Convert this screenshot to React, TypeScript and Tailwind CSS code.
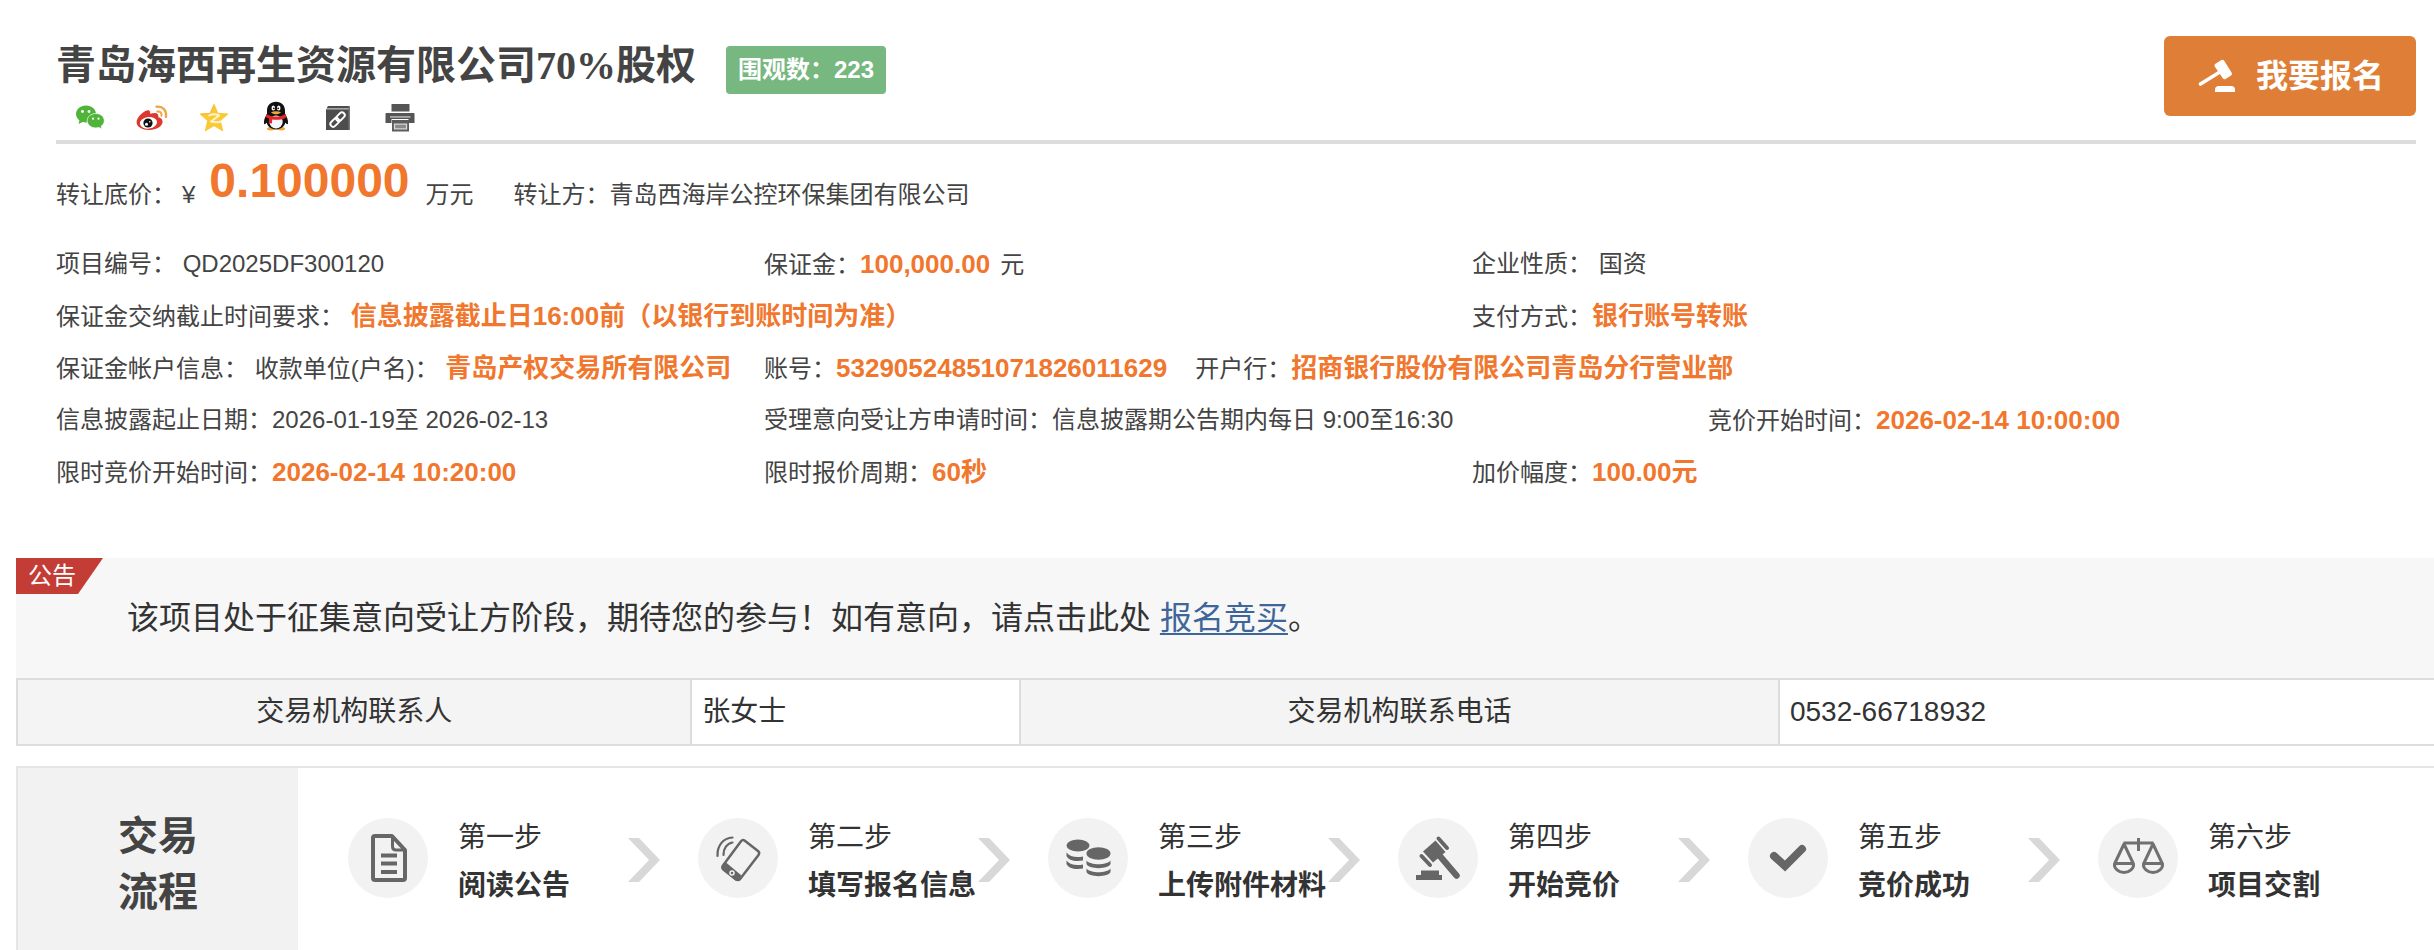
import React from "react";

type Piece = { text: string; strong?: boolean; className?: string };
type Cell = { span: string; pieces: Piece[] };

const infoRows: Cell[][] = [
    [
        { span: "col-span-3", pieces: [{ text: "项目编号： " }, { text: "QD2025DF300120" }] },
        {
            span: "col-span-3",
            pieces: [{ text: "保证金：" }, { text: "100,000.00", strong: true }, { text: "元", className: "ml-2.5" }]
        },
        { span: "col-span-4", pieces: [{ text: "企业性质： " }, { text: "国资" }] }
    ],
    [
        {
            span: "col-span-6",
            pieces: [
                { text: "保证金交纳截止时间要求： " },
                { text: "信息披露截止日16:00前（以银行到账时间为准）", strong: true }
            ]
        },
        { span: "col-span-4", pieces: [{ text: "支付方式：" }, { text: "银行账号转账", strong: true }] }
    ],
    [
        {
            span: "col-span-3",
            pieces: [
                { text: "保证金帐户信息： " },
                { text: "收款单位(户名)： " },
                { text: "青岛产权交易所有限公司", strong: true }
            ]
        },
        {
            span: "col-span-7",
            pieces: [
                { text: "账号：" },
                { text: "53290524851071826011629", strong: true },
                { text: "开户行：", className: "ml-7" },
                { text: "招商银行股份有限公司青岛分行营业部", strong: true }
            ]
        }
    ],
    [
        { span: "col-span-3", pieces: [{ text: "信息披露起止日期：" }, { text: "2026-01-19至 2026-02-13" }] },
        {
            span: "col-span-4",
            pieces: [{ text: "受理意向受让方申请时间：" }, { text: "信息披露期公告期内每日 9:00至16:30" }]
        },
        { span: "col-span-3", pieces: [{ text: "竞价开始时间：" }, { text: "2026-02-14 10:00:00", strong: true }] }
    ],
    [
        { span: "col-span-3", pieces: [{ text: "限时竞价开始时间：" }, { text: "2026-02-14 10:20:00", strong: true }] },
        { span: "col-span-3", pieces: [{ text: "限时报价周期：" }, { text: "60秒", strong: true }] },
        { span: "col-span-4", pieces: [{ text: "加价幅度：" }, { text: "100.00元", strong: true }] }
    ]
];

const WechatIcon = () => (
    <svg viewBox="0 0 32 32" className="size-8">
        <path d="M12 5.500C6.300 5.500 2 9.300 2 14c0 2.600 1.300 4.800 3.400 6.400L4.600 24l4-2c1.100.3 2.200.5 3.400.5 5.700 0 10-3.800 10-8.500S17.700 5.500 12 5.500z" fill="#50b43a" />
        <path d="M21.800 13.500c-4.800 0-8.600 3.200-8.600 7.200s3.800 7.200 8.600 7.200c1 0 2-.2 2.900-.4l3.200 1.300-.6-2.800c1.900-1.300 3-3.200 3-5.300 0-4-3.700-7.200-8.500-7.200z" fill="#50b43a" stroke="#fff" strokeWidth=".7" />
        <circle cx="8.500" cy="11.500" r="1.400" fill="#fff" />
        <circle cx="15" cy="11.500" r="1.400" fill="#fff" />
        <circle cx="19" cy="18.700" r="1.100" fill="#fff" />
        <circle cx="24.500" cy="18.700" r="1.100" fill="#fff" />
    </svg>
);

const WeiboIcon = () => (
    <svg viewBox="0 0 32 32" className="size-8">
        <path d="M14 13.800c.8-3.400-1.200-4.600-4.600-2.800C5 13.300.6 18.200.6 22.300c0 4.700 5.700 7.700 12.400 7.700 7.800 0 13.600-4 13.600-8.200 0-2.700-2-4-4.300-4.600.7-3.600-1.700-5.500-8.300-3.400z" fill="#dc3830" />
        <ellipse cx="12.500" cy="22.800" rx="8.600" ry="5.800" fill="#fff" transform="rotate(-8 12.500 22.800)" />
        <circle cx="12" cy="23" r="4.600" fill="#111" />
        <circle cx="10.500" cy="24.200" r="1.500" fill="#fff" />
        <circle cx="13.800" cy="21.800" r=".8" fill="#fff" />
        <path d="M20.500 6.700c6.300-.8 10.600 4 9.300 10.200" fill="none" stroke="#efa548" strokeWidth="2.400" strokeLinecap="round" />
        <path d="M21.300 11.500c3-.4 4.700 1.500 4.200 4.200" fill="none" stroke="#efa548" strokeWidth="2" strokeLinecap="round" />
    </svg>
);

const QzoneIcon = () => (
    <svg viewBox="0 0 32 32" className="size-8">
        <path d="M16 4.500l3.700 8.800 9.900.8-7.400 6.500 2.300 10L16 25.400l-8.500 5.200 2.300-10L2.400 14.100l9.900-.8z" fill="#fac937" stroke="#fac937" strokeWidth="1.200" strokeLinejoin="round" />
        <path d="M10.500 15.500c3.500-1.500 7.500-1.500 10.500 0l-8 6c3.500 1 7 1 10.500 0" fill="none" stroke="#fff3cf" strokeWidth="2" strokeLinejoin="round" />
        <path d="M3 14.200l9-.4 3.800-7.500" fill="none" stroke="#f3b83c" strokeWidth="1" />
    </svg>
);

const QqIcon = () => (
    <svg viewBox="0 0 32 32" className="size-8">
        <ellipse cx="11" cy="28.800" rx="4" ry="1.700" fill="#f1a33c" />
        <ellipse cx="21" cy="28.800" rx="4" ry="1.700" fill="#f1a33c" />
        <path d="M16 1.800c-5.500 0-9 3.700-9 8.700v3.600c-2 3-3.300 6-3 9.200.2 1.600 1.500 1 2.600-.7 1 4.200 4.700 6.800 9.400 6.800s8.400-2.600 9.400-6.800c1.100 1.700 2.400 2.300 2.600.7.300-3.200-1-6.200-3-9.200v-3.600c0-5-3.500-8.700-9-8.700z" fill="#111" />
        <ellipse cx="16" cy="22" rx="6.700" ry="6.500" fill="#f4f7fa" />
        <path d="M6.300 13.700c5.500 3.800 14 3.800 19.400 0l.8 3.500c-3.400 2.400-9.200 3.200-14.300 2.200l-.2 4-3.200-.5.200-4.400c-1.400-.5-2.500-1-3.200-1.600z" fill="#e2262c" />
        <ellipse cx="13.300" cy="8" rx="1.800" ry="2.500" fill="#fff" />
        <ellipse cx="18.700" cy="8" rx="1.800" ry="2.500" fill="#fff" />
        <circle cx="13.800" cy="8.300" r=".9" fill="#111" />
        <circle cx="18.200" cy="8.300" r=".9" fill="#111" />
        <path d="M11 12.300c3-1.400 7-1.400 10 0-2.700 2.700-7.300 2.700-10 0z" fill="#f0a92e" />
    </svg>
);

const CopyLinkIcon = () => (
    <svg viewBox="0 0 32 32" className="size-8">
        <path d="M6 6h22v2.500H4.500z" fill="#4d4d4d" />
        <path d="M4 9.300h24V30H4z" fill="#4d4d4d" />
        <path d="M26.500 6H28v24h-1.500z" fill="#777" />
        <g fill="none" stroke="#fff" strokeWidth="1.900" transform="rotate(-45 15.500 19.500)">
            <rect x="6.500" y="16.800" width="10" height="5.600" rx="2.800" />
            <rect x="14.500" y="16.800" width="10" height="5.600" rx="2.800" />
        </g>
    </svg>
);

const PrinterIcon = () => (
    <svg viewBox="0 0 32 32" className="size-8">
        <path d="M7.500 4h18v7.500h-18z" fill="#555" />
        <path d="M3.500 13h26c.6 0 1 .4 1 1v9h-6v-4h-17v4h-6v-9c0-.6.500-1 2-1z" fill="#555" />
        <path d="M6 16.200h20.500v1.500H6z" fill="#bbb" />
        <path d="M8 20h17v11.500H8z" fill="#5c5c5c" />
        <path d="M10.500 24.200h12v4.600h-12z" fill="#8a8a8a" stroke="#d8d8d8" strokeWidth="1.300" />
    </svg>
);

const shareLinks = [
    { name: "微信", icon: <WechatIcon /> },
    { name: "新浪微博", icon: <WeiboIcon /> },
    { name: "QQ空间", icon: <QzoneIcon /> },
    { name: "QQ", icon: <QqIcon /> },
    { name: "复制链接", icon: <CopyLinkIcon /> },
    { name: "打印", icon: <PrinterIcon /> }
];

const HammerIcon = () => (
    <svg viewBox="0 0 38 34" className="w-[38px] h-[34px]" fill="#fff">
        <path d="M2.500 25L21 13.500" stroke="#fff" strokeWidth="3.600" strokeLinecap="round" />
        <path d="M18.500 6.500l6-3.700 7.500 12-5.500 3.400z" stroke="#fff" strokeWidth="4" strokeLinejoin="round" />
        <path d="M17 33v-2.500c0-2 1.500-3.500 3.500-3.500h13c2 0 3.500 1.500 3.500 3.500V33z" />
    </svg>
);

const DocIcon = () => (
    <g fill="none" stroke="#666" strokeWidth="4">
        <path d="M27 18h17l13 14v28a2 2 0 0 1-2 2H27a2 2 0 0 1-2-2V20a2 2 0 0 1 2-2z" strokeLinejoin="round" />
        <path d="M44.500 18v10.500c0 2.500 1 3.500 3.500 3.500h9" strokeWidth="3" />
        <path d="M33 37.500h16M33 45.500h16M33 54h16" />
    </g>
);

const PhoneIcon = () => (
    <g fill="none" stroke="#666" strokeLinecap="round">
        <path d="M46.500 22.500l13.500 10.500c1.500 1.200 1.500 2.500.5 4L42.500 60.500c-1.500 2-3 2-4.500.8L25.500 51.500c-1.500-1.200-1.500-2.500-.5-4L43 23.300c1-1.300 2.200-1.700 3.500-.8z" strokeWidth="2.500" />
        <path d="M28 44.500l15.500 13-3 4.500c-1.200 1.200-2.500 1-3.500.2L25 52.500c-1.500-1.300-1.500-2.500-.5-4z" fill="#666" stroke="none" />
        <circle cx="34" cy="55" r="2" stroke="#f2f2f2" strokeWidth="1.500" />
        <path d="M19.500 38C19 28 25 20 34.500 19.500" strokeWidth="2.200" />
        <path d="M25.500 37c-.2-6.500 3.500-11.500 9-12.500" strokeWidth="2.200" />
    </g>
);

const CoinsIcon = () => (
    <g fill="#666">
        <ellipse cx="30" cy="27.500" rx="11.500" ry="6" />
        <path d="M18.500 34.500c3 4.300 10 5.500 16.500 4v4c-8 1.500-15-.5-16.500-4.500z" />
        <path d="M18.500 42.500c3 4.300 10 5.500 16.500 4v4c-8 1.500-15-.5-16.500-4.500z" />
        <ellipse cx="50.500" cy="35.500" rx="12" ry="6.200" />
        <path d="M38.500 42.500c4 5 20 5 24 0v3.500c-2 5.500-22 5.500-24 0z" />
        <path d="M38.500 50.500c4 5 20 5 24 0V54c-2 5.500-22 5.500-24 0z" />
    </g>
);

const GavelIcon = () => (
    <g fill="#666">
        <path d="M37.500 22.500L47.500 34 35 44.500 25 33.500z" />
        <path d="M40.500 20.500l8.500 9.500M23.500 38l8.500 9" fill="none" stroke="#666" strokeWidth="4" strokeLinecap="round" />
        <path d="M41 37l17.500 20.500" fill="none" stroke="#666" strokeWidth="6.500" strokeLinecap="round" />
        <path d="M23 52.500h18v4.500h3V62H18v-5h5z" />
    </g>
);

const CheckIcon = () => (
    <path d="M26 38l11 10 17-17" fill="none" stroke="#666" strokeWidth="8" strokeLinecap="round" />
);

const ScalesIcon = () => (
    <g fill="none" stroke="#707070" strokeWidth="3">
        <path d="M25.500 25h30M40.500 20v13" />
        <path d="M26 26l-9.500 20c-.5 4.500 4 8.500 9.500 8.500s10-4 9.500-8.500zM16.500 45.500h19" strokeLinejoin="round" />
        <path d="M55 26l-9.500 20c-.5 4.500 4 8.500 9.500 8.500s10-4 9.500-8.500zM45.500 45.500h19" strokeLinejoin="round" />
    </g>
);

const steps = [
    { order: "第一步", label: "阅读公告", icon: <DocIcon /> },
    { order: "第二步", label: "填写报名信息", icon: <PhoneIcon /> },
    { order: "第三步", label: "上传附件材料", icon: <CoinsIcon /> },
    { order: "第四步", label: "开始竞价", icon: <GavelIcon /> },
    { order: "第五步", label: "竞价成功", icon: <CheckIcon /> },
    { order: "第六步", label: "项目交割", icon: <ScalesIcon /> }
];

const InfoCell = ({ cell }: { cell: Cell }) => (
    <div className={cell.span}>
        {cell.pieces.map((p) => (
            <span
                key={p.text}
                className={p.strong ? "text-[26px] font-bold text-[#f0772d]" : p.className}
            >
                {p.text}
            </span>
        ))}
    </div>
);

const ProjectHeader = () => (
    <header className="flex items-start justify-between border-b-4 border-[#ddd] pb-2">
        <div className="pt-[38px]">
            <div className="flex items-end gap-[30px]">
                <h1 className="font-['Liberation_Serif','Noto_Sans_CJK_SC',serif] text-[40px] leading-14 font-bold">
                    青岛海西再生资源有限公司70%股权
                </h1>
                <span className="rounded bg-[#77b780] px-3 text-2xl leading-12 font-bold text-white">
                    围观数：223
                </span>
            </div>
            <div className="mt-1.5 flex gap-[30px] pl-[18px]">
                {shareLinks.map((s) => (
                    <a key={s.name} href="#share" aria-label={s.name}>
                        {s.icon}
                    </a>
                ))}
            </div>
        </div>
        <button className="mt-9 flex h-20 items-center gap-5 rounded-md bg-[#df7e37] pr-8 pl-[34px] text-[32px] font-bold text-white">
            <HammerIcon />
            我要报名
        </button>
    </header>
);

const PriceLine = () => (
    <div className="flex items-end pt-[13px] pb-[23px] leading-10">
        <span>转让底价：</span>
        <span className="ml-1.5">¥</span>
        <strong className="mb-2.5 ml-3.5 text-5xl leading-12 text-[#f0772d]">0.100000</strong>
        <span className="ml-4">万元</span>
        <span className="ml-10">转让方：</span>
        <span>青岛西海岸公控环保集团有限公司</span>
    </div>
);

const Notice = () => (
    <section className="h-30 bg-[#f7f7f7] text-[#333]">
        <div className="flex items-start">
            <h2 className="w-[87px] bg-[#c43c36] pl-3 text-2xl leading-9 text-white [clip-path:polygon(0_0,100%_0,62px_100%,0_100%)]">
                公告
            </h2>
            <p className="ml-6 pt-9 text-[32px] leading-12">
                该项目处于征集意向受让方阶段，期待您的参与！如有意向，请点击此处{" "}
                <a href="#apply" className="text-[#3e6699] underline decoration-2 underline-offset-4">
                    报名竞买
                </a>
                。
            </p>
        </div>
    </section>
);

const ContactTable = () => (
    <table className="w-full table-fixed border-collapse border-y-2 border-l-2 border-[#ddd] text-[28px] leading-16 text-[#333]">
        <tbody>
            <tr>
                <th className="w-[27.9%] border-r-2 border-[#ddd] bg-[#f4f4f4] p-0 font-normal">交易机构联系人</th>
                <td className="w-[13.6%] border-r-2 border-[#ddd] p-0 pl-2.5">张女士</td>
                <th className="w-[31.4%] border-r-2 border-[#ddd] bg-[#f4f4f4] p-0 font-normal">交易机构联系电话</th>
                <td className="p-0 pl-2.5">0532-66718932</td>
            </tr>
        </tbody>
    </table>
);

const Flow = () => (
    <section className="mt-5 flex border-t-2 border-l-2 border-[#e5e5e5] text-[#333]">
        <h2 className="w-[280px] shrink-0 bg-[#f2f2f2] pt-10 pb-8 text-center text-[40px] leading-14 font-bold text-[#444]">
            交易
            <br />
            流程
        </h2>
        <ol className="flex flex-wrap pt-[50px] pl-[50px]">
            {steps.map((step, i) => (
                <li key={step.order} className={i < steps.length - 1 ? "flex w-[350px] items-start" : "flex items-start"}>
                    <svg viewBox="0 0 80 80" className="size-20 shrink-0">
                        <circle cx="40" cy="40" r="40" fill="#f2f2f2" />
                        {step.icon}
                    </svg>
                    <div className="-mt-1 ml-[30px] w-[170px] shrink-0 text-[28px] leading-12">
                        <div>{step.order}</div>
                        <div className="font-bold">{step.label}</div>
                    </div>
                    {i < steps.length - 1 && (
                        <svg viewBox="0 0 32 44" className="mt-5 h-11 w-8 shrink-0" fill="#d8d8d8">
                            <path d="M0 0h11l21 22-21 22H0l21-22z" />
                        </svg>
                    )}
                </li>
            ))}
        </ol>
    </section>
);

const App = () => (
    <div className="min-h-screen overflow-x-hidden bg-white pl-4 font-['Liberation_Sans','Noto_Sans_CJK_SC',sans-serif] text-2xl text-[#444]">
        <div className="pr-[18px] pb-15 pl-10">
            <ProjectHeader />
            <PriceLine />
            {infoRows.map((row, i) => (
                <div key={i} className="grid h-13 grid-cols-10 leading-13 whitespace-nowrap">
                    {row.map((cell) => (
                        <InfoCell key={cell.pieces[0].text} cell={cell} />
                    ))}
                </div>
            ))}
        </div>
        <Notice />
        <ContactTable />
        <Flow />
    </div>
);

export default App;
